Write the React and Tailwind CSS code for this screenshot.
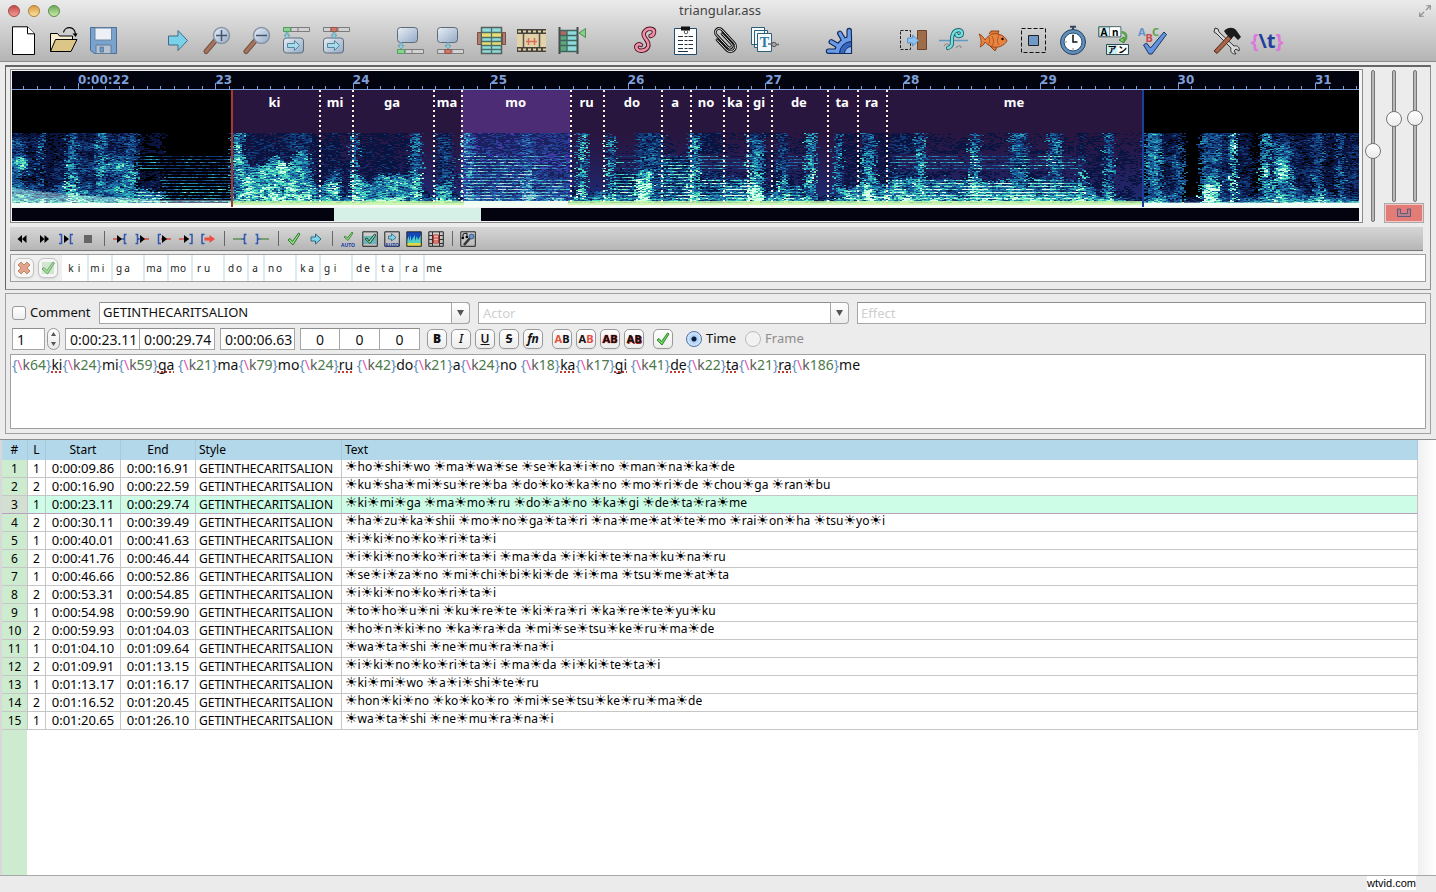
import { useMemo, useState } from 'react';
import { Maximize2 } from 'lucide-react';

const VIEW_START = 21.52;
const VIEW_END = 31.32;
const LINE_START = 23.11;
const LINE_END = 29.74;
const VIEW_LENGTH = VIEW_END - VIEW_START;

const syllables = [
  { k: 64, text: 'ki', bad: true },
  { k: 24, text: 'mi' },
  { k: 59, text: 'ga ', bad: true },
  { k: 21, text: 'ma' },
  { k: 79, text: 'mo' },
  { k: 24, text: 'ru ', bad: true },
  { k: 42, text: 'do' },
  { k: 21, text: 'a' },
  { k: 24, text: 'no ' },
  { k: 18, text: 'ka', bad: true },
  { k: 17, text: 'gi ', bad: true },
  { k: 41, text: 'de', bad: true },
  { k: 22, text: 'ta', bad: true },
  { k: 21, text: 'ra', bad: true },
  { k: 186, text: 'me' }
];

const lines = [
  [1, '0:00:09.86', '0:00:16.91', '☀ho☀shi☀wo ☀ma☀wa☀se ☀se☀ka☀i☀no ☀man☀na☀ka☀de'],
  [2, '0:00:16.90', '0:00:22.59', '☀ku☀sha☀mi☀su☀re☀ba ☀do☀ko☀ka☀no ☀mo☀ri☀de ☀chou☀ga ☀ran☀bu'],
  [1, '0:00:23.11', '0:00:29.74', '☀ki☀mi☀ga ☀ma☀mo☀ru ☀do☀a☀no ☀ka☀gi ☀de☀ta☀ra☀me'],
  [2, '0:00:30.11', '0:00:39.49', '☀ha☀zu☀ka☀shii ☀mo☀no☀ga☀ta☀ri ☀na☀me☀at☀te☀mo ☀rai☀on☀ha ☀tsu☀yo☀i'],
  [1, '0:00:40.01', '0:00:41.63', '☀i☀ki☀no☀ko☀ri☀ta☀i'],
  [2, '0:00:41.76', '0:00:46.44', '☀i☀ki☀no☀ko☀ri☀ta☀i ☀ma☀da ☀i☀ki☀te☀na☀ku☀na☀ru'],
  [1, '0:00:46.66', '0:00:52.86', '☀se☀i☀za☀no ☀mi☀chi☀bi☀ki☀de ☀i☀ma ☀tsu☀me☀at☀ta'],
  [2, '0:00:53.31', '0:00:54.85', '☀i☀ki☀no☀ko☀ri☀ta☀i'],
  [1, '0:00:54.98', '0:00:59.90', '☀to☀ho☀u☀ni ☀ku☀re☀te ☀ki☀ra☀ri ☀ka☀re☀te☀yu☀ku'],
  [2, '0:00:59.93', '0:01:04.03', '☀ho☀n☀ki☀no ☀ka☀ra☀da ☀mi☀se☀tsu☀ke☀ru☀ma☀de'],
  [1, '0:01:04.10', '0:01:09.64', '☀wa☀ta☀shi ☀ne☀mu☀ra☀na☀i'],
  [2, '0:01:09.91', '0:01:13.15', '☀i☀ki☀no☀ko☀ri☀ta☀i ☀ma☀da ☀i☀ki☀te☀ta☀i'],
  [1, '0:01:13.17', '0:01:16.17', '☀ki☀mi☀wo ☀a☀i☀shi☀te☀ru'],
  [2, '0:01:16.52', '0:01:20.45', '☀hon☀ki☀no ☀ko☀ko☀ro ☀mi☀se☀tsu☀ke☀ru☀ma☀de'],
  [1, '0:01:20.65', '0:01:26.10', '☀wa☀ta☀shi ☀ne☀mu☀ra☀na☀i']
];

/* ---------- spectrogram ---------- */

// start, end, body height, body level, full height level, harmonics
const segments = [
  [0, 12, 48, 0.5, 0.3, 0], [12, 26, 24, 0.4, 0.2, 0], [26, 30, 30, 0.4, 0.42, 0], [30, 54, 20, 0.4, 0.18, 0],
  [54, 63, 36, 0.7, 0.44, 0], [63, 84, 22, 0.5, 0.24, 0], [84, 92, 30, 0.5, 0.48, 0], [92, 112, 30, 0.5, 0.3, 0],
  [112, 124, 45, 0.5, 0.38, 0], [124, 150, 18, 0.55, 0.14, 1], [150, 219, 44, 0.14, 0.02, 1], [219, 230, 60, 0.6, 0.46, 0],
  [230, 280, 46, 0.66, 0.2, 0], [280, 298, 52, 0.6, 0.28, 0], [298, 314, 24, 0.5, 0.16, 0], [314, 328, 28, 0.6, 0.2, 0],
  [328, 338, 16, 0.3, 0.12, 0], [338, 344, 30, 0.5, 0.5, 0], [344, 398, 28, 0.62, 0.16, 0], [398, 408, 34, 0.7, 0.44, 0],
  [408, 424, 12, 0.3, 0.06, 0], [424, 439, 28, 0.6, 0.28, 0], [439, 450, 12, 0.3, 0.08, 0], [450, 460, 30, 0.55, 0.54, 1],
  [460, 510, 54, 0.4, 0.22, 1], [510, 520, 50, 0.62, 0.42, 1], [520, 556, 28, 0.5, 0.26, 1], [556, 565, 14, 0.3, 0.08, 0],
  [565, 573, 24, 0.5, 0.56, 0], [573, 594, 14, 0.4, 0.06, 0], [594, 600, 38, 0.5, 0.44, 0], [600, 624, 36, 0.4, 0.08, 1],
  [624, 640, 40, 0.7, 0.34, 0], [640, 650, 20, 0.45, 0.28, 0], [650, 677, 52, 0.44, 0.1, 1], [677, 686, 40, 0.4, 0.5, 0],
  [686, 710, 28, 0.45, 0.2, 1], [710, 736, 30, 0.55, 0.1, 1], [736, 750, 42, 0.66, 0.4, 0], [750, 766, 18, 0.4, 0.12, 0],
  [766, 774, 30, 0.6, 0.34, 0], [774, 794, 22, 0.5, 0.12, 1], [794, 802, 30, 0.5, 0.52, 0], [802, 822, 10, 0.4, 0.05, 0],
  [822, 828, 28, 0.5, 0.44, 0], [828, 850, 24, 0.6, 0.14, 0], [850, 862, 44, 0.66, 0.42, 0], [862, 878, 26, 0.6, 0.14, 0],
  [878, 904, 28, 0.7, 0.22, 1], [904, 911, 28, 0.5, 0.52, 0], [911, 958, 28, 0.6, 0.12, 1], [958, 966, 36, 0.7, 0.46, 1],
  [966, 998, 26, 0.6, 0.11, 1], [998, 1014, 26, 0.6, 0.42, 1], [1014, 1036, 28, 0.6, 0.12, 1], [1036, 1048, 28, 0.62, 0.46, 1],
  [1048, 1066, 26, 0.58, 0.12, 1], [1066, 1072, 36, 0.7, 0.24, 0], [1072, 1092, 18, 0.5, 0.12, 0], [1092, 1100, 20, 0.6, 0.38, 0],
  [1100, 1132, 8, 0.4, 0.1, 0], [1132, 1148, 20, 0.5, 0.42, 0], [1148, 1164, 16, 0.3, 0.22, 0], [1164, 1170, 26, 0.4, 0.32, 0],
  [1170, 1188, 6, 0.3, 0.04, 0], [1188, 1206, 34, 0.66, 0.36, 0], [1206, 1218, 20, 0.3, 0.24, 0], [1218, 1223, 20, 0.3, 0.6, 0],
  [1223, 1240, 16, 0.3, 0.18, 0], [1240, 1248, 16, 0.3, 0.08, 0], [1248, 1258, 28, 0.4, 0.48, 0], [1258, 1262, 16, 0.4, 0.16, 0],
  [1262, 1278, 48, 0.5, 0.36, 0], [1278, 1300, 16, 0.45, 0.2, 0], [1300, 1310, 30, 0.6, 0.34, 0], [1310, 1324, 16, 0.3, 0.16, 0],
  [1324, 1330, 20, 0.4, 0.36, 0], [1330, 1348, 12, 0.3, 0.2, 0]
];

// x, height, radius x, radius y
const hotspots = [
  [8, 44, 8, 8], [101, 39, 14, 7], [225, 58, 4, 10], [268, 42, 6, 6], [321, 18, 8, 8], [1254, 38, 4, 8],
  [1268, 38, 10, 16], [1219, 60, 4, 14], [1196, 14, 10, 12], [631, 20, 8, 20], [744, 16, 6, 14], [856, 14, 8, 12]
];

const levels = ['#0a1440', '#123672', '#1a5a98', '#2384ae', '#33b2b8', '#4fdcbc', '#86f0c0', '#d6ffe8'];

function hash(x, y) {
  let n = Math.imul(x, 374761393) + Math.imul(y, 668265263);
  n = Math.imul(n ^ (n >>> 13), 1274126177);
  return ((n ^ (n >>> 16)) >>> 0) / 4294967295;
}

// value noise, linear between lattice points
function smooth(x, y) {
  const xi = Math.floor(x);
  const yi = Math.floor(y);
  const fx = x - xi;
  const fy = y - yi;
  const top = hash(xi, yi) * (1 - fx) + hash(xi + 1, yi) * fx;
  const bottom = hash(xi, yi + 1) * (1 - fx) + hash(xi + 1, yi + 1) * fx;
  return top * (1 - fy) + bottom * fy;
}

function segmentAt(x) {
  return segments.find((s) => x < s[1]) || segments[segments.length - 1];
}

function loudness(x, h) {
  const jitter = (hash(x, h + 400) - 0.5) * 9;
  const [, , body, bodyLevel, full, harmonics] = segmentAt(Math.max(0, x + jitter));
  const edge = body + (smooth(x / 7, 50) - 0.5) * (harmonics ? 4 : 14) + (hash(x, h + 70) - 0.5) * 6;
  let v = full * (1.1 - (h / 75) * 0.3);
  if (h < edge) v = Math.max(v, bodyLevel * (1.05 - (h / body) * 0.35));
  v += 0.3 * Math.max(0, 1 - h / 13);
  if (harmonics) {
    const band = h < body || (h > 36 && h < 54);
    const presence = smooth(x / 18, h * 3);
    if (band) v += h % 3 === 0 ? 0.12 + 0.24 * presence : -0.12;
  }
  hotspots.forEach(([hx, hh, rx, ry]) => {
    const d = ((x - hx) / rx) ** 2 + ((h - hh) / ry) ** 2;
    if (d < 1) v += 0.34 * (1 - d);
  });
  const cloud = 0.65 + smooth(x / 9, h / 6) * 0.7;
  const streak = hash((x + h * 5) >> 2, h + 900);
  const grain = hash(x, h);
  return v * cloud * (0.3 + streak * 0.8 + grain * 0.6);
}

function buildSpectrogram() {
  const paths = levels.map(() => '');
  for (let h = 3; h < 75; h++) {
    let runStart = 0;
    let runLevel = -1;
    for (let x = 0; x <= 1348; x += 2) {
      const level = x < 1348 ? Math.min(levels.length - 1, Math.floor(loudness(x, h) * 9.2) - 1) : -2;
      if (level !== runLevel) {
        if (runLevel >= 0) paths[runLevel] += `M${runStart} ${117 - h}h${x - runStart}v1h-${x - runStart}z`;
        runStart = x;
        runLevel = level;
      }
    }
  }
  return paths;
}

const Spectrogram = () => {
  const paths = useMemo(buildSpectrogram, []);
  return (
    <svg
      className="absolute inset-0 h-full w-full"
      viewBox="0 0 1347 117"
      preserveAspectRatio="none"
      shapeRendering="crispEdges"
      aria-hidden="true"
    >
      <linearGradient id="floor" x1="0" y1="0" x2="0" y2="1">
        <stop offset="0" stopColor="#1c2470" stopOpacity="0" />
        <stop offset="1" stopColor="#1c2f80" stopOpacity=".9" />
      </linearGradient>
      <rect x="219" y="43" width="911" height="74" fill="url(#floor)" />
      <rect x="451" y="43" width="108" height="74" fill="#3038a8" opacity=".6" />
      {paths.map((d, i) => <path key={levels[i]} d={d} fill={levels[i]} />)}
      <path d="M451 43h108v74H451z" fill="#5a50e0" opacity=".2" />
      <path d="M0 98q60 8 150 12h69v7H0zM1130 112h217v5h-217z" fill="#e9fff2" opacity=".35" />
      <path d="M0 113h1347v4H0z" fill="#f2fff6" />
      <path d="M219 111h911v4H219z" fill="#c4f2a0" opacity=".8" />
      <path d="M452 111h104v4H452z" fill="#f4fff8" opacity=".9" />
    </svg>
  );
};

const Ruler = () => {
  const ticks = [];
  for (let t = 216; t <= 313; t++) ticks.push(t);
  return (
    <div className="relative h-[19px] border-b border-[#7f9fd8] bg-[#03030f]">
      <svg className="absolute inset-0 h-full w-full" viewBox="0 0 1347 18" preserveAspectRatio="none" aria-hidden="true">
        {ticks.map((t) => {
          const x = Math.round(((t / 10 - VIEW_START) / VIEW_LENGTH) * 1347);
          return <path key={t} d={`M${x + 0.5} ${t % 10 ? 15 : 12}V18`} stroke="#7f9fd8" />;
        })}
      </svg>
      {[22, 23, 24, 25, 26, 27, 28, 29, 30, 31].map((sec) => (
        <span
          key={sec}
          className="absolute top-0 font-['DejaVu_Sans',sans-serif] text-xs leading-[18px] font-bold text-[#7f9fd8]"
          style={{ left: `${((sec - VIEW_START) / VIEW_LENGTH) * 100}%` }}
        >
          {sec === 22 ? '0:00:22' : sec}
        </span>
      ))}
    </div>
  );
};

const AudioDisplay = () => (
  <div className="min-w-0 flex-1 border border-[#8a8a8a] bg-[#f4f4f4] py-px pr-[3px] pl-px">
    <Ruler />
    <div className="relative h-[117px] bg-black">
      <div className="flex h-full">
        <div style={{ flexGrow: (LINE_START - VIEW_START) * 100, flexBasis: 0 }} />
        {syllables.map((syl, i) => (
          <div key={i} className={syl.text === 'mo' ? 'bg-[#4c2c74]' : 'bg-[#29163f]'} style={{ flexGrow: syl.k, flexBasis: 0 }} />
        ))}
        <div style={{ flexGrow: (VIEW_END - LINE_END) * 100, flexBasis: 0 }} />
      </div>
      <Spectrogram />
      <div className="absolute inset-0 flex">
        <div style={{ flexGrow: (LINE_START - VIEW_START) * 100, flexBasis: 0 }} />
        {syllables.map((syl, i) => (
          <div
            key={i}
            className={`min-w-0 bg-[length:2px_100%] bg-no-repeat pt-1 text-center text-[13px] leading-4 font-bold text-white ${
              i === 0
                ? 'bg-[linear-gradient(#a63a32,#a63a32)]'
                : 'bg-[repeating-linear-gradient(#fff3e0_0_2px,transparent_2px_5px)]'
            }`}
            style={{ flexGrow: syl.k, flexBasis: 0 }}
          >
            {syl.text.trim()}
          </div>
        ))}
        <div
          className="bg-[linear-gradient(#1c3f9c,#1c3f9c)] bg-[length:2px_100%] bg-no-repeat"
          style={{ flexGrow: (VIEW_END - LINE_END) * 100, flexBasis: 0 }}
        />
      </div>
    </div>
    <div className="mt-px flex h-[13px] bg-[#03030f]">
      <div className="flex-[322]" />
      <div className="flex-[147] bg-[#d6f0e8]" />
      <div className="flex-[878]" />
    </div>
  </div>
);

const sliderClass =
  'w-4 appearance-none bg-transparent [direction:rtl] [writing-mode:vertical-lr] ' +
  '[&::-webkit-slider-runnable-track]:w-1 [&::-webkit-slider-runnable-track]:rounded-full [&::-webkit-slider-runnable-track]:border [&::-webkit-slider-runnable-track]:border-[#777] [&::-webkit-slider-runnable-track]:bg-[#b8b8b8] ' +
  '[&::-webkit-slider-thumb]:-ml-[7px] [&::-webkit-slider-thumb]:size-4 [&::-webkit-slider-thumb]:appearance-none [&::-webkit-slider-thumb]:rounded-full [&::-webkit-slider-thumb]:border [&::-webkit-slider-thumb]:border-[#777] [&::-webkit-slider-thumb]:bg-linear-to-b [&::-webkit-slider-thumb]:from-white [&::-webkit-slider-thumb]:to-[#ececec]';

const AudioSliders = () => (
  <div className="flex gap-[3px] px-[2px]">
    <input type="range" aria-label="Horizontal zoom" defaultValue="46" className={`mt-px h-[152px] ${sliderClass}`} />
    <div className="flex flex-col justify-between">
      <div className="flex justify-center gap-[5px]">
        <input type="range" aria-label="Vertical zoom" defaultValue="65" className={`mt-px h-[132px] ${sliderClass}`} />
        <input type="range" aria-label="Volume" defaultValue="66" className={`mt-px h-[132px] ${sliderClass}`} />
      </div>
      <button
        type="button"
        aria-label="Link sliders"
        className="flex h-5 w-10 items-center justify-center border border-[#a9a9a9] bg-[#e37b77] outline-1 -outline-offset-2 outline-[#f3c9c7]"
      >
        <svg width="16" height="10" viewBox="0 0 16 10" fill="none">
          <path d="M1.500 1v7.500h13V1h-3v4.500h-7V1z" fill="#b9808c" stroke="#5c5b7c" />
        </svg>
      </button>
    </div>
  </div>
);

/* ---------- main toolbar icons ---------- */

const SnapBar = ({ y, red }) => (
  <>
    <path d={`M1.500 ${y}h26v4h-26zM9 ${y}v4M16 ${y}v4`} fill="#d2d2d2" stroke="#7b7b7b" />
    {red ? <path d={`M9 ${y}h6v4H9z`} fill="#cf7768" stroke="#9a5147" /> : <path d={`M1.500 ${y}h7v4h-7z`} fill="#86d68f" stroke="#5b9a62" />}
  </>
);

const ScreenBox = ({ y, arrow }) => (
  <>
    <rect x="1.500" y={y} width="20" height="15" rx="3" fill="url(#screen)" stroke="#5e6a78" />
    {arrow && <path d={`M5.500 ${y + 5.5}h7v-3l5 5-5 5v-3h-7z`} fill="#a9dcea" stroke="#5386a0" />}
  </>
);

const DownArrow = ({ x, y }) => (
  <path d={`M${x - 1} ${y}h2v3h2l-3 3.500-3-3.500h2z`} fill="#8fd0e0" stroke="#6297a8" strokeWidth=".8" />
);

const Magnifier = ({ plus }) => (
  <>
    <path d="M13 15 4 25.500" stroke="#6f5144" strokeWidth="5" strokeLinecap="round" />
    <path d="M13 15 4 25.500" stroke="#a7735c" strokeWidth="3" strokeLinecap="round" />
    <circle cx="19.500" cy="9.500" r="8" fill="url(#screen)" stroke="#8794a5" strokeWidth="1.500" />
    <path d={plus ? 'M14 9.500h11M19.500 4v11' : 'M14 9.500h11'} stroke="#45536b" strokeWidth="1.500" />
  </>
);

const GearTeeth = ({ color, width }) => (
  <path
    d="M13 25.200H4.500M14.500 20l-7.200-4.200M20 14.500l-4.200-7.200M25.200 13V4.500"
    stroke={color}
    strokeWidth={width}
    strokeLinecap="round"
  />
);

const toolGroups = [
  [
    ['New', <><path d="M4.500.8h15l7 7v20.700h-22z" fill="#fff" stroke="#000" /><path d="M19.500.8v7h7" fill="#fff" stroke="#000" /></>],
    ['Open', <>
      <path d="M2.500 25.500v-18h7l2 2.500h13v4" fill="#f6ecd0" stroke="#000" />
      <path d="M7.500 13.500H29l-6 12H2.500z" fill="#dcc687" stroke="#000" />
      <path d="M15.500 6.500c1-6 11-7.500 12 2" fill="none" stroke="#000" strokeWidth="1.200" />
      <path d="M24.500 7.500h5l-1.800 3.500z" />
    </>],
    ['Save', <>
      <path d="M2.500 1.500h26v26h-22l-4-3z" fill="#79a3cc" stroke="#4a6f98" />
      <path d="M7 2h16.500v12H7z" fill="#edf1f5" stroke="#6b87a5" />
      <path d="M8 19h15v8.500H8z" fill="#b7c3cf" stroke="#5f7c9b" />
      <path d="M12 21h3.500v5H12z" fill="#6e98c4" stroke="#4a6f98" strokeWidth=".7" />
    </>]
  ],
  [
    ['Jump to', <path d="M6.500 10h9.500V4.500l9.500 10-9.500 10V19H6.500z" fill="#79d2ea" stroke="#446a84" />],
    ['Zoom in', <Magnifier plus />],
    ['Zoom out', <Magnifier />],
    ['Jump video to start', <><SnapBar y={1.5} /><ScreenBox y={12} arrow /><DownArrow x={5} y={6} /></>],
    ['Jump video to end', <><SnapBar y={1.5} red /><ScreenBox y={12} arrow /><DownArrow x={12} y={6} /></>]
  ],
  [
    ['Snap start to video', <><ScreenBox y={1.5} /><DownArrow x={5} y={16.5} /><SnapBar y={23.5} /></>],
    ['Snap end to video', <><ScreenBox y={1.5} /><DownArrow x={12} y={16.5} /><SnapBar y={23.5} red /></>],
    ['Select visible', <>
      <path d="M1.500 6.500h4v12h-4zM26.500 6.500h3v12h-3z" fill="#b07f71" stroke="#7c4b42" />
      <path d="M5.500 1.500h20v26h-20z" fill="#8fdcdb" stroke="#55605a" strokeWidth="1.500" />
      <path d="M6 7h19v4H6zM6 16h19v3H6z" fill="#e9dc74" />
      <path d="M6 6.500h19M6 11.500h19M6 15.500h19M6 19.500h19M6 23.500h19M15.500 2v25" stroke="#4d7169" strokeWidth="1.300" />
    </>],
    ['Snap to scene', <>
      <path d="M1 3h29v23H1z" fill="#e2d2a8" />
      <path d="M1 5.500h29M1 23.500h29" stroke="#46443d" strokeWidth="5" />
      <path d="M2 5.500h28M2 23.500h28" stroke="#e2d2a8" strokeWidth="2" strokeDasharray="3 2" />
      <path d="M7.500 8v13M23.500 8v13" stroke="#57544a" strokeWidth="1.500" />
      <path d="M12.500 12v7M18.500 12v7M10 15.500h11" stroke="#db6d56" strokeWidth="1.500" />
    </>],
    ['Shift to frame', <>
      <path d="M3.500 4h18v22h-18z" fill="#8fdada" />
      <path d="M4 4h7v5H4z" fill="#b1685f" /><path d="M4 9h7v17H4z" fill="#5fa77b" />
      <path d="M3.500 1v27M21.500 1v27" stroke="#454c4b" strokeWidth="2" />
      <path d="M3.500 4.500h18M3.500 9.500h18M3.500 14.500h18M3.500 19.500h18M3.500 25.500h18M11 4v22" stroke="#3f6560" strokeWidth="1.300" />
      <path d="M29.500 2.500v9l-6.500-4.500z" fill="#87cf87" stroke="#4e8d55" />
    </>]
  ],
  [
    ['Styles manager', <g transform="translate(1 1)">
      <path d="M19.500 9c4-1 5-6 1-7-5-1-9 3-7.500 7s6 6 4 11c-2 4-9 5-11 2s1-6 4-4" fill="none" stroke="#4a1425" strokeWidth="4.400" strokeLinecap="round" />
      <path d="M19.500 9c4-1 5-6 1-7-5-1-9 3-7.500 7s6 6 4 11c-2 4-9 5-11 2s1-6 4-4" fill="none" stroke="#f090a6" strokeWidth="2.600" strokeLinecap="round" />
    </g>],
    ['Properties', <>
      <path d="M4.500 2.500h22v26h-22z" fill="#fff" stroke="#1e4c70" />
      <path d="M11 .5h9v4h-9z" fill="#111" /><circle cx="16" cy="6" r="1.800" fill="none" stroke="#555" />
      <path d="M8 10.500h15M8 14.500h15M8 18.500h15M8 22.500h15" stroke="#23303c" strokeDasharray="5 1.500 3 1" />
      <path d="M8 25.500h10" stroke="#23303c" />
    </>],
    ['Attachments', <g transform="translate(15 14.500) rotate(-43)" fill="none" strokeLinecap="round">
      <path d="M2.500-7v14a2.500 2.500 0 0 1-5 0v-17a3.800 3.800 0 0 1 7.600 0v18a5.200 5.200 0 0 1-10.400 0v-14" stroke="#111" strokeWidth="2.800" />
      <path d="M2.500-7v14a2.500 2.500 0 0 1-5 0v-17a3.800 3.800 0 0 1 7.600 0v18a5.200 5.200 0 0 1-10.400 0v-14" stroke="#e4e4e4" strokeWidth=".9" />
    </g>],
    ['Fonts collector', <>
      <path d="M1.500 1.500h13v17h-13zM4.500 4.500h13v17h-13z" fill="#f4fafc" stroke="#2b6078" />
      <path d="M7.500 7.500h14v18h-14z" fill="#f4fafc" stroke="#2b6078" />
      <text x="14.500" y="21" textAnchor="middle" fontFamily="Liberation Serif" fontWeight="700" fontSize="14" fill="#2f77a0">T</text>
      <path d="M18 18h6M29 18.500h-3" stroke="#666" strokeWidth="1.500" /><circle cx="24" cy="18.500" r="2.200" fill="#aaa" stroke="#555" />
    </>]
  ],
  [
    ['Automation', <>
      <GearTeeth color="#132a5c" width={5.5} />
      <path d="M10.500 27.500a17 17 0 0 1 17-17v17z" fill="#6a9be8" stroke="#132a5c" strokeWidth="1.200" />
      <GearTeeth color="#6a9be8" width={3.2} />
      <path d="M15.500 27.500a12 12 0 0 1 12-12v12z" fill="#3567c0" stroke="#132a5c" />
      <path d="M20.500 27.500a7 7 0 0 1 7-7v7z" fill="#8fb4ee" stroke="#132a5c" />
    </>]
  ],
  [
    ['Shift times', <>
      <path d="M2.500 4.500h10v19h-10z" fill="none" stroke="#222" strokeDasharray="3 1.500" />
      <path d="M19.500 4.500h9v19h-9z" fill="#a06d49" stroke="#6b452b" />
      <path d="M9.500 12h5V9l6 5.500-6 5.500v-3h-5z" fill="#8fc3f2" stroke="#5c93c8" />
    </>],
    ['Timing post-processor', <>
      <path d="M1 14.500h29" stroke="#5d9ac0" strokeWidth="1.500" />
      <path d="M10 22c7-2 2-9 5-14 2-5 9-5 9-1s-6 4-5.500 1" fill="none" stroke="#25616a" strokeWidth="4.200" strokeLinecap="round" />
      <path d="M10 22c7-2 2-9 5-14 2-5 9-5 9-1s-6 4-5.500 1" fill="none" stroke="#70e0e0" strokeWidth="2.400" strokeLinecap="round" />
      <path d="M6 20c2-3 4-3 5 0M18 22c2-3 5-3 5 0" fill="none" stroke="#8a8a8a" strokeWidth="1.200" />
    </>],
    ['Kanji timer', <>
      <path d="m11 8 2-3h8l-2 5M12 20l5 5 2-4" fill="#e07630" stroke="#8f4519" />
      <path d="M1 8c3 1 5 4 6 6 4-6 9-7 13-6 5 1 8 4 9 7-3 5-9 7-14 6-4-1-6-3-8-5-1 3-3 4-5 5 2-4 1-9-1-13z" fill="#e98440" stroke="#98481c" />
      <path d="M11 11c1 3 1 6-1 8M14 10c2 3 2 7 0 10M21 9c-2 3-2 8 0 10" fill="none" stroke="#b4561f" /><circle cx="24.500" cy="13" r="1.200" />
    </>],
    ['Resolution resampler', <>
      <path d="M3.500 2.500h24v24h-24z" fill="none" stroke="#111" strokeDasharray="4 2" />
      <path d="M10.500 9.500h10v10h-10z" fill="#6f9ac8" stroke="#222" />
    </>],
    ['Timer', <>
      <path d="M12 .8h6M15 1v4" stroke="#33465c" strokeWidth="2" />
      <circle cx="15" cy="16" r="12.500" fill="#5e8fbd" stroke="#27405c" /><circle cx="15" cy="16" r="9" fill="#fff" stroke="#2c4a69" />
      <path d="M15 9v7h4.500" fill="none" stroke="#111" strokeWidth="1.500" />
      <path d="M15 8.500v1M15 22.500v1M7.500 16h1" stroke="#111" />
    </>],
    ['Translation assistant', <>
      <path d="M.8.800h22v10H.8zM12 .8v10" fill="#d7f0f0" stroke="#2d4f55" /><path d="M12 1.300h10.300v9H12z" fill="#fff" />
      <path d="M8.500 18.500h22v10h-22z" fill="#cdeef2" stroke="#2d4f55" /><path d="M19.500 19h10v9h-10z" fill="#fff" />
      <text x="2.500" y="9.500" fontFamily="Noto Sans" fontWeight="700" fontSize="10">A</text>
      <text x="14" y="9.500" fontFamily="Noto Sans" fontWeight="700" fontSize="10">n</text>
      <text x="9.500" y="27" fontFamily="Noto Sans CJK JP" fontWeight="700" fontSize="9">ア</text>
      <text x="20" y="27" fontFamily="Noto Sans CJK JP" fontWeight="700" fontSize="9">ン</text>
      <path d="M23.500 6c7 1 5 9 1.500 9" fill="none" stroke="#5aa34c" strokeWidth="2.500" /><path d="m21 14 5-3v6z" fill="#76cf68" stroke="#3c7f33" />
    </>],
    ['Spell checker', <>
      <text x="0" y="9.500" fontFamily="Noto Sans" fontWeight="700" fontSize="11" fill="#5f93cf">A</text>
      <text x="7.500" y="16" fontFamily="Noto Sans" fontWeight="700" fontSize="11" fill="#cc4b4b">B</text>
      <text x="14" y="9.500" fontFamily="Noto Sans" fontWeight="700" fontSize="11" fill="#5aa34c">C</text>
      <path d="m5.500 19 3-2 4 5 13.500-16 2.500 2.500L14 28h-3z" fill="#6294dd" stroke="#1c3362" />
    </>]
  ],
  [
    ['Options', <>
      <path d="m3 2 3 1 1 3 15 14c4-1 6 2 5 5l-3-2-2 2 2 3c-4 0-6-2-5-6L5 8 2 6z" fill="#d9d9d9" stroke="#333" />
      <path d="M2 25 17 9l3 3L5 27.500z" fill="#a86447" stroke="#4d2a1b" />
      <path d="M12 5c4-4 9-4 12-1l5 7-3 3-4-4-3 3-5-5z" fill="#1b1b1b" />
    </>],
    ['Cycle tag mode', <text x="15" y="22" textAnchor="middle" fontFamily="Noto Sans" fontWeight="700" fontSize="20" fill="#dc78dc">
      {'{'}<tspan fill="#1f3f9e">{'\\t'}</tspan>{'}'}
    </text>]
  ]
];

/* ---------- audio toolbar icons (16 x 16) ---------- */

const bracketL = 'M13 3.500h-2v4l-1.500.5 1.500.5v4h2';
const bracketR = 'M3 3.500h2v4l1.500.5L5 8.500v4H3';
const frame = <path d="M.8.800h14.500v14.500H.8z" fill="none" stroke="#222" />;
const greenTick = 'm2 9 2-1.500 2.500 3L12.500 2 14 3 7 14z';
const auto = <text x="8" y="15.500" textAnchor="middle" fontFamily="Noto Sans" fontWeight="700" fontSize="5" fill="#1b3fa8">AUTO</text>;

const audioGroups = [
  [
    ['Previous line', <path d="M8 4v8L3.500 8zM12.500 4v8L8 8z" />],
    ['Next line', <path d="M4 4v8l4.500-4zM8.500 4v8L13 8z" />],
    ['Play selection', <><path d="M1 3.500h2.500v9H1M15 3.500h-2.500v9H15" fill="none" stroke="#2d57b3" strokeWidth="1.500" /><path d="M6 4v8l5-4z" /></>],
    ['Stop', <path d="M4 4h8v8H4z" fill="#666" />]
  ],
  [
    ['Play before selection', <><path d="M1 8h9" stroke="#d34a40" strokeWidth="1.500" /><path d="M5 4v8l5-4z" /><path d={bracketL} fill="none" stroke="#2d57b3" strokeWidth="1.500" transform="translate(1.500)" /></>],
    ['Play after selection', <><path d="M6 8h9" stroke="#d34a40" strokeWidth="1.500" /><path d="M6 4v8l5-4z" /><path d={bracketR} fill="none" stroke="#2d57b3" strokeWidth="1.500" transform="translate(-1.500)" /></>],
    ['Play first part', <><path d="M5 8h10" stroke="#d34a40" strokeWidth="1.500" /><path d="M6 4v8l5-4z" /><path d="M5 3.500H2.500v9H5" fill="none" stroke="#2d57b3" strokeWidth="1.500" /></>],
    ['Play last part', <><path d="M1 8h10" stroke="#d34a40" strokeWidth="1.500" /><path d="M6 4v8l5-4z" /><path d="M11.500 3.500H14v9h-2.500" fill="none" stroke="#2d57b3" strokeWidth="1.500" /></>],
    ['Play to end', <><path d="M4.500 3.500H2v9h2.500" fill="none" stroke="#2d57b3" strokeWidth="1.500" /><path d="M4.500 6.500h5v-2.500l5.500 4-5.500 4v-2.500h-5z" fill="#ee4f43" /></>]
  ],
  [
    ['Lead in', <><path d="M1 8h9" stroke="#5b8f57" strokeWidth="1.500" /><path d={bracketL} fill="none" stroke="#2d57b3" strokeWidth="1.500" transform="translate(1.500)" /></>],
    ['Lead out', <><path d="M6 8h9" stroke="#5b8f57" strokeWidth="1.500" /><path d={bracketR} fill="none" stroke="#2d57b3" strokeWidth="1.500" transform="translate(-1.500)" /></>]
  ],
  [
    ['Commit', <path d={greenTick} fill="#8cdc7e" stroke="#2f7a2c" />],
    ['Go to selection', <path d="M3 6h4.500V3L13 8l-5.500 5v-3H3z" fill="#7fd6ea" stroke="#2f6480" />]
  ],
  [
    ['Auto commit', <><path d="m4 6 1.500-1L7.500 7 12 1l1 1-5 7.500z" fill="#8cdc7e" stroke="#2f7a2c" strokeWidth=".8" />{auto}</>],
    ['Auto next line', <><path d="M1.500 5h13v8h-13z" fill="#6cb5bd" />{frame}<path d="m3 8 2-1 2 3 5.500-7L14 4 8 12.500z" fill="#8cdc7e" stroke="#194c55" /></>],
    ['Auto scroll', <><path d="M4.500 5h3V2.500L12 6.500 7.500 10V8h-3z" fill="#7fd6ea" stroke="#2f6480" strokeWidth=".8" />{frame}{auto}</>],
    ['Spectrum analyzer', <><path d="M1 1h14v14H1z" fill="#1447b8" /><path d="M1 15V9l2-4v5l2-6v6l2-3 2-3v6l2-5 1 4 3-5v11z" fill="#4fd2c4" /><path d="M1 15v-3h14v3z" fill="#e0d84a" />{frame}</>],
    ['Linked scrolling', <>{frame}<path d="M4.500 1v14M11.500 1v14M1 4.500h3M1 8.500h3M1 12.500h3M12 4.500h3M12 8.500h3M12 12.500h3" stroke="#333" /><path d="M5.500 4h5v8h-5zM5.500 7h5M5.500 10h5" fill="#f5b3ac" stroke="#c3382c" /></>]
  ],
  [
    ['Karaoke mode', <>{frame}<path d="M3 7V3l4-1v4" fill="none" stroke="#111" /><circle cx="2.800" cy="7" r="1.300" /><circle cx="6.800" cy="6" r="1.300" /><path d="M4 14 10 7" stroke="#333" strokeWidth="2.500" /><circle cx="11.500" cy="5.500" r="2.500" fill="#6b95c8" stroke="#37577d" /></>]
  ]
];

const Toolbar = () => (
  <div className="flex h-10 gap-[34px] pl-[3px]">
    <svg width="0" height="0" className="absolute" aria-hidden="true">
      <linearGradient id="screen" x1="0" y1="0" x2="1" y2="1">
        <stop offset="0" stopColor="#e8eef5" />
        <stop offset="1" stopColor="#93aac6" />
      </linearGradient>
    </svg>
    {toolGroups.map((group) => (
      <div key={group[0][0]} className="flex">
        {group.map(([label, art]) => (
          <button key={label} type="button" aria-label={label} className="flex w-10 items-center justify-center">
            <svg width="30" height="30" viewBox="0 0 30 30" className="overflow-visible">{art}</svg>
          </button>
        ))}
      </div>
    ))}
  </div>
);

const AudioToolbar = () => (
  <div className="mt-1 mr-[3px] flex h-6 border-b border-[#777] bg-linear-to-b from-[#d6d6d6] to-[#b6b6b6] pl-px">
    {audioGroups.map((group, g) => (
      <div key={g} className="flex">
        {g > 0 && (
          <div className="flex w-[10px] justify-center">
            <div className="my-1 w-px bg-[#666]" />
          </div>
        )}
        {group.map(([label, art]) => (
          <button key={label} type="button" aria-label={label} className="flex w-[22px] items-center justify-center">
            <svg width="16" height="16" viewBox="0 0 16 16">{art}</svg>
          </button>
        ))}
      </div>
    ))}
  </div>
);

const KaraokeBar = () => (
  <div className="mt-[3px] flex h-7 border border-[#a0a0a0] bg-white">
    <div className="flex items-center gap-1 bg-[#f0f0f0] pr-1 pl-[3px]">
      <button type="button" aria-label="Cancel split" className="size-5 rounded-md border border-[#c4c4c4] bg-[#f6f6f6] shadow-sm">
        <svg viewBox="0 0 18 18"><path d="m3 6 3-3 3 3 3-3 3 3-3 3 3 3-3 3-3-3-3 3-3-3 3-3z" fill="#e0a58a" stroke="#c08468" /></svg>
      </button>
      <button type="button" aria-label="Accept split" className="size-5 rounded-md border border-[#c4c4c4] bg-[#f6f6f6] shadow-sm">
        <svg viewBox="0 0 18 18"><path d="M3 3h12v12H3z" fill="#cfe6cf" /><path d="m3 10 2-1.500 3 3L14 3l1.500 1L8.500 15z" fill="#a8dca0" stroke="#6ba86a" /></svg>
      </button>
    </div>
    <div className="flex pl-px text-[10px] leading-[26px] text-[#222]">
      {syllables.map((syl, i) => (
        <div key={i} className={`flex pr-1 ${i ? 'border-l-2 border-[#dcebf0] pl-0.5' : 'pl-1'}`}>
          {syl.text.split('').map((ch, c) => (
            <span key={c} className="flex w-2 justify-center">{ch}</span>
          ))}
        </div>
      ))}
    </div>
  </div>
);

/* ---------- line editor ---------- */

const fieldClass = 'h-[22px] border border-[#a6a6a6] border-t-[#8e8e8e] bg-white outline-none';

const DownTriangle = () => (
  <svg width="7" height="6" viewBox="0 0 7 6"><path d="M0 0h7L3.500 6z" fill="#555" /></svg>
);

const TagButton = ({ label, children }) => (
  <button
    type="button"
    aria-label={label}
    className="flex size-5 items-center justify-center rounded-[5px] border border-[#9a9a9a] bg-linear-to-b from-white to-[#ececec] text-xs leading-4 font-bold shadow-xs"
  >
    {children}
  </button>
);

const Radio = ({ label, name, checked, disabled, onChange }) => (
  <label className={`flex items-center gap-1 ${disabled ? 'text-[#8c8c8c]' : 'text-[#111]'}`}>
    <input
      type="radio"
      name={name}
      checked={checked}
      disabled={disabled}
      onChange={onChange}
      className="size-4 appearance-none rounded-full border border-[#bbb] bg-[#f2f2f2] checked:border-[#4a6fa5] checked:bg-[radial-gradient(circle,#0c1c38_0_2px,#a9cdf3_3px,#d8ebff_7px)]"
    />
    {label}
  </label>
);

const LineEditor = () => {
  const [comment, setComment] = useState(false);
  const [layer, setLayer] = useState('1');
  const [mode, setMode] = useState('time');
  const [text, setText] = useState(syllables.map((s) => `{\\k${s.k}}${s.text}`).join(''));

  return (
    <section className="mx-[5px] mt-[3px] flex flex-col gap-1 border border-[#a0a0a0] bg-[#ececec] p-1 pt-2 text-[13px]">
      <div className="flex items-center gap-2 pl-[2px]">
        <label className="flex w-[79px] items-center gap-1">
          <input
            type="checkbox"
            checked={comment}
            onChange={(e) => setComment(e.target.checked)}
            className="size-[14px] appearance-none rounded-[3px] border border-[#999] bg-linear-to-b from-white to-[#eee] checked:bg-[#6ea5e8]"
          />
          Comment
        </label>
        <div className="relative flex flex-[373]">
          <select aria-label="Style" className={`${fieldClass} w-full appearance-none rounded-r-sm pl-[3px]`}>
            <option>GETINTHECARITSALION</option>
          </select>
          <span className="pointer-events-none absolute inset-y-0 right-0 flex w-[19px] items-center justify-center rounded-r-sm border border-[#a6a6a6] bg-linear-to-b from-white to-[#ececec]">
            <DownTriangle />
          </span>
        </div>
        <div className="flex flex-[373]">
          <input type="text" aria-label="Actor" placeholder="Actor" className={`${fieldClass} min-w-0 flex-1 pl-1 placeholder:text-[#cfcfcf]`} />
          <button type="button" aria-label="Show actors" className="flex w-[18px] items-center justify-center rounded-r-sm border border-l-0 border-[#a6a6a6] bg-linear-to-b from-white to-[#ececec]">
            <DownTriangle />
          </button>
        </div>
        <input type="text" aria-label="Effect" placeholder="Effect" className={`${fieldClass} min-w-0 flex-[567] pl-[3px] placeholder:text-[#cfcfcf]`} />
      </div>

      <div className="flex items-center pl-[2px]">
        <input type="text" aria-label="Layer" value={layer} onChange={(e) => setLayer(e.target.value)} className={`${fieldClass} w-[33px] pl-1 text-sm`} />
        <div className="mr-[5px] ml-[2px] flex h-[22px] w-[13px] flex-col rounded-full border border-[#999] bg-linear-to-b from-white to-[#e8e8e8]">
          <button type="button" aria-label="Layer up" className="flex flex-1 items-center justify-center">
            <svg width="5" height="4" viewBox="0 0 5 4"><path d="M0 4h5L2.500 0z" fill="#555" /></svg>
          </button>
          <button type="button" aria-label="Layer down" className="flex flex-1 items-center justify-center">
            <svg width="5" height="4" viewBox="0 0 5 4"><path d="M0 0h5L2.500 4z" fill="#555" /></svg>
          </button>
        </div>
        <div className="flex gap-[5px]">
          <div className="flex">
            <input type="text" aria-label="Start time" defaultValue="0:00:23.11" className={`${fieldClass} w-[75px] pl-1 text-sm`} />
            <input type="text" aria-label="End time" defaultValue="0:00:29.74" className={`${fieldClass} w-[75px] border-l-0 pl-1 text-sm`} />
          </div>
          <input type="text" aria-label="Duration" defaultValue="0:00:06.63" className={`${fieldClass} w-[75px] pl-1 text-sm`} />
          <div className="flex">
            <input type="text" aria-label="Left margin" defaultValue="0" className={`${fieldClass} w-10 text-center text-sm`} />
            <input type="text" aria-label="Right margin" defaultValue="0" className={`${fieldClass} w-10 border-l-0 text-center text-sm`} />
            <input type="text" aria-label="Vertical margin" defaultValue="0" className={`${fieldClass} w-10 border-l-0 text-center text-sm`} />
          </div>
        </div>
        <div className="ml-[7px] flex gap-1">
          <TagButton label="Bold"><span className="font-black">B</span></TagButton>
          <TagButton label="Italic"><span className="font-medium italic">I</span></TagButton>
          <TagButton label="Underline"><span className="font-semibold underline">U</span></TagButton>
          <TagButton label="Strikeout"><span className="line-through">S</span></TagButton>
          <TagButton label="Font"><span className="italic">fn</span></TagButton>
        </div>
        <div className="ml-[9px] flex gap-1 text-[#111] *:text-[11px]">
          <TagButton label="Primary color"><span><span className="text-[#e0523c]">A</span>B</span></TagButton>
          <TagButton label="Secondary color"><span>A<span className="text-[#e0523c]">B</span></span></TagButton>
          <TagButton label="Outline color"><span className="[text-shadow:0_0_1px_#d21f1f,0_0_1px_#d21f1f]">AB</span></TagButton>
          <TagButton label="Shadow color"><span className="[text-shadow:1px_1px_0_#a81f1f]">AB</span></TagButton>
        </div>
        <div className="mr-[13px] ml-[9px] flex">
          <TagButton label="Commit line">
            <svg width="16" height="16" viewBox="0 0 16 16"><path d={greenTick} fill="#6fd35f" stroke="#2f8a2c" /></svg>
          </TagButton>
        </div>
        <div className="flex gap-[9px]">
          <Radio label="Time" name="mode" checked={mode === 'time'} onChange={() => setMode('time')} />
          <Radio label="Frame" name="mode" checked={mode === 'frame'} onChange={() => setMode('frame')} disabled />
        </div>
      </div>

      <div className="grid h-[75px] border border-[#a0a0a0] bg-white text-sm leading-5">
        <div aria-hidden="true" className="px-px whitespace-pre-wrap [grid-area:1/1]">
          {syllables.map((syl, i) => (
            <span key={i}>
              <span className="text-[#5f8fbd]">{'{'}</span>
              <span className="text-[#e552b0]">\</span>
              <span className="text-[#5a5a5a]">k</span>
              <span className="text-[#4c7a4c]">{syl.k}</span>
              <span className="text-[#5f8fbd]">{'}'}</span>
              <span className={syl.bad ? 'underline decoration-[#c0392b] decoration-dotted decoration-2 [text-decoration-skip-ink:none]' : ''}>{syl.text.trim()}</span>
              {syl.text.endsWith(' ') && ' '}
            </span>
          ))}
        </div>
        <textarea
          aria-label="Line text"
          spellCheck="false"
          value={text}
          onChange={(e) => setText(e.target.value)}
          className="resize-none bg-transparent px-px text-transparent caret-black outline-none [grid-area:1/1]"
        />
      </div>
    </section>
  );
};

/* ---------- subtitle grid ---------- */

const cell = 'h-[18px] border-r border-b border-[#c6c6c6] p-0 whitespace-nowrap';

// override tags are folded into a sun sign
const FoldedText = ({ text }) =>
  text.split('☀').slice(1).map((part, i) => (
    <span key={i}>
      <span className="font-['DejaVu_Sans',sans-serif] text-sm leading-3">☀</span>
      {part}
    </span>
  ));

const SubtitleGrid = () => {
  const [active, setActive] = useState(2);

  return (
    <section className="mt-[5px] flex flex-1 border-t border-[#8e8e8e] bg-white">
      <div className="flex min-w-0 flex-1 flex-col border-l-2 border-[#d8d8d8]">
        <table className="w-full table-fixed border-separate border-spacing-0 text-[13px] leading-[17px] text-black">
          <colgroup>
            <col className="w-[26px]" />
            <col className="w-[18px]" />
            <col className="w-[75px]" />
            <col className="w-[75px]" />
            <col className="w-[146px]" />
            <col />
          </colgroup>
          <thead>
            <tr className="h-5 bg-[#b3d8ea] text-xs [&>th]:border-r [&>th]:border-[#a9cadb] [&>th]:p-0 [&>th]:font-normal">
              <th>#</th>
              <th>L</th>
              <th>Start</th>
              <th>End</th>
              <th className="text-left"><span className="pl-[3px]">Style</span></th>
              <th className="text-left"><span className="pl-[3px]">Text</span></th>
            </tr>
          </thead>
          <tbody>
            {lines.map(([layer, start, end, text], i) => (
              <tr
                key={i}
                onClick={() => setActive(i)}
                className={i === active ? 'bg-[#cdfde6] [&>td]:border-b-[#b79fc0]' : ''}
              >
                <td className={`${cell} text-center text-xs ${i === active ? 'bg-[#d3dfd0]' : 'bg-[#cdeccf]'}`}>{i + 1}</td>
                <td className={`${cell} text-center text-xs`}>{layer}</td>
                <td className={`${cell} text-center`}>{start}</td>
                <td className={`${cell} text-center`}>{end}</td>
                <td className={`${cell} text-xs`}><span className="pl-[3px]">GETINTHECARITSALION</span></td>
                <td className={`${cell} align-top text-xs leading-3`}>
                  <div className="pl-[3px]"><FoldedText text={text} /></div>
                </td>
              </tr>
            ))}
          </tbody>
        </table>
        <div className="w-[25px] flex-1 bg-[#cdeccf]" />
      </div>
      <div className="w-[18px] bg-linear-to-r from-[#f0f0f0] to-white" />
    </section>
  );
};

const App = () => (
  <div className="flex min-h-screen flex-col bg-[#ececec] font-['Noto_Sans','DejaVu_Sans',sans-serif] text-[#111]">
    <header className="border-b border-[#8c8c8c] bg-linear-to-b from-[#ebebeb] to-[#b4b4b4]">
      <div className="flex h-[21px] items-center pt-px">
        <div className="flex flex-1 gap-2 pl-2">
          <button type="button" aria-label="Close" className="size-3 rounded-full border border-[#a04a48] bg-linear-to-b from-[#c4494d] to-[#f29a94]" />
          <button type="button" aria-label="Minimize" className="size-3 rounded-full border border-[#a8803c] bg-linear-to-b from-[#dc9c3e] to-[#fbe09c]" />
          <button type="button" aria-label="Zoom" className="size-3 rounded-full border border-[#5e8a4b] bg-linear-to-b from-[#6fac58] to-[#c3eaa6]" />
        </div>
        <h1 className="text-[13px] text-[#444]">triangular.ass</h1>
        <div className="flex flex-1 justify-end pr-1">
          <button type="button" aria-label="Full screen">
            <Maximize2 size={14} strokeWidth={2} color="#8d8d8d" />
          </button>
        </div>
      </div>
      <Toolbar />
    </header>

    <section className="mx-[5px] mt-[3px] border border-t-2 border-[#8f8f8f] border-t-[#666] border-l-[#666] bg-[#ececec] pt-[2px] pr-1 pb-[7px] pl-1">
      <div className="flex">
        <AudioDisplay />
        <AudioSliders />
      </div>
      <AudioToolbar />
      <KaraokeBar />
    </section>

    <LineEditor />
    <SubtitleGrid />

    <footer className="flex h-[17px] items-start justify-end border-t border-[#a8a8a8] bg-[#ebebeb] pr-5">
      <span className="bg-white font-['Liberation_Sans',sans-serif] text-[11px] leading-[14px] text-black">wtvid.com</span>
    </footer>
  </div>
);

export default App;
